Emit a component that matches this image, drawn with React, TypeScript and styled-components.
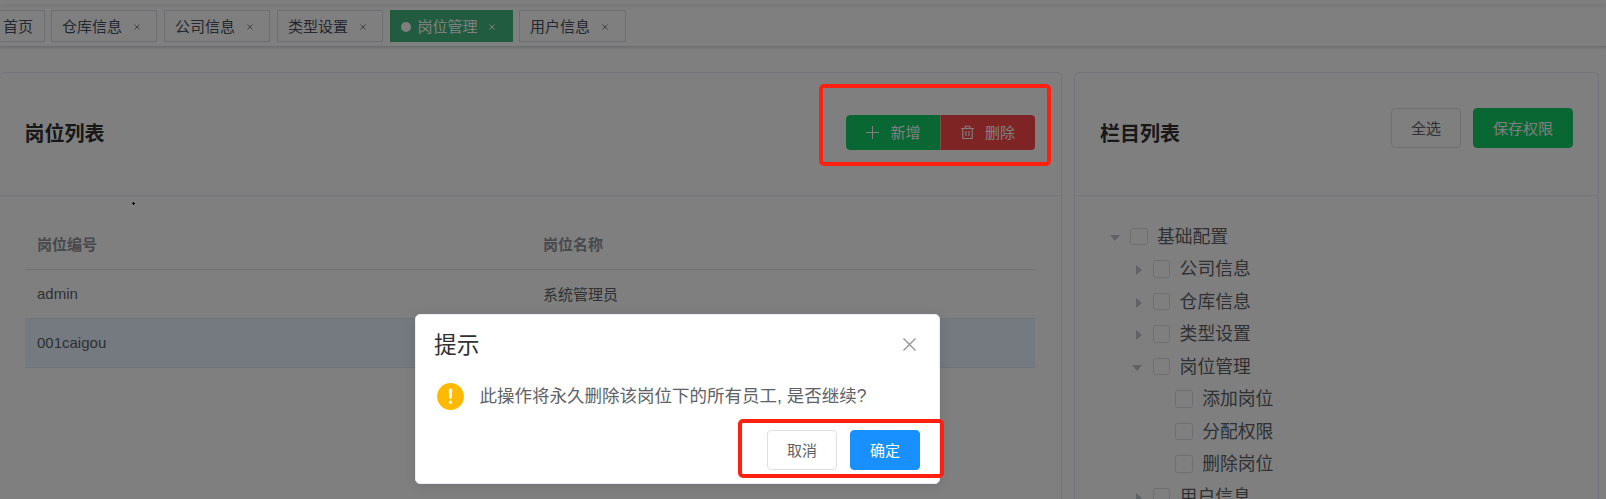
import React from 'react';
import styled, { createGlobalStyle, css } from 'styled-components';

const Global = createGlobalStyle`
  * { box-sizing: border-box; }
  html, body { margin: 0; padding: 0; background: #fff; }
  body {
    height: 499px;
    overflow: hidden;
    font-family: "Liberation Sans", "Noto Sans CJK SC", sans-serif;
    font-size: 15px;
    color: #606266;
  }
`;

const Page = styled.div`
  position: relative;
  width: 1606px;
  height: 499px;
  overflow: hidden;
  background: #fff;
`;

const NavbarEdge = styled.div`
  height: 5px;
  box-shadow: 0 1px 4px rgba(0, 21, 41, 0.08);
`;

const TagBar = styled.nav`
  display: flex;
  gap: 7px;
  height: 42px;
  padding-top: 5px;
  border-bottom: 1px solid #d8dce5;
  box-shadow: 0 1px 3px 0 rgba(0, 0, 0, 0.12), 0 0 3px 0 rgba(0, 0, 0, 0.04);
`;

const Tag = styled.div<{ $active?: boolean; $width: number }>`
  display: flex;
  align-items: center;
  flex: none;
  width: ${p => p.$width}px;
  height: 32px;
  padding: 1px 0 0 10px;
  border: 1px solid ${p => (p.$active ? '#42b983' : '#d8dce5')};
  background: ${p => (p.$active ? '#42b983' : '#fff')};
  color: ${p => (p.$active ? '#fff' : '#495060')};
  line-height: 29px;
  white-space: nowrap;
  &:first-child { margin: 0 -1px 0 -8px; }
  &:last-child { margin-left: -1px; }
`;

const ActiveDot = styled.span`
  width: 10px;
  height: 10px;
  margin-right: 6.5px;
  border-radius: 50%;
  background: #fff;
`;

const TagClose = styled.svg`
  width: 6px;
  height: 6px;
  margin: 1px 0 0 11.5px;
`;

const Columns = styled.main`
  display: grid;
  grid-template-columns: 1062px 525px;
  gap: 12px;
  padding-top: 25px;
`;

const Card = styled.section<{ $edge?: boolean }>`
  height: 460px;
  border: 1px solid #e6ebf5;
  border-left-width: ${p => (p.$edge ? 0 : 1)}px;
  border-radius: 5px;
  background: #fff;
`;

const CardHeader = styled.header<{ $inset?: number }>`
  display: flex;
  align-items: center;
  justify-content: space-between;
  height: 123px;
  padding: 0 25px 0 ${p => p.$inset ?? 25}px;
  border-bottom: 1px solid #e6ebf5;
`;

const CardTitle = styled.h3`
  margin: 0;
  font-size: 20px;
  line-height: 30px;
  color: #303133;
`;

const Actions = styled.div`
  display: flex;
  gap: 12px;
  margin-bottom: 12px;
`;

type Tone = 'plain' | 'success' | 'danger' | 'primary';
const tones: Record<Tone, [string, string, string]> = {
  plain: ['#fff', '#dcdfe6', '#606266'],
  success: ['#13ce66', '#13ce66', '#fff'],
  danger: ['#ff4949', '#ff4949', '#fff'],
  primary: ['#1890ff', '#1890ff', '#fff'],
};

const Button = styled.button<{ $tone: Tone; $width: number; $height?: number }>`
  display: flex;
  align-items: center;
  justify-content: center;
  width: ${p => p.$width}px;
  height: ${p => p.$height || 40}px;
  padding: 1px 0 0;
  border: 1px solid ${p => tones[p.$tone][1]};
  border-radius: 4px;
  background: ${p => tones[p.$tone][0]};
  color: ${p => tones[p.$tone][2]};
  font: inherit;
  line-height: 20px;
  svg { margin-right: 10px; }
`;

const ButtonGroup = styled.div`
  display: flex;
  margin: 0 1px 3px 0;
  ${Button} { padding: 0; }
  ${Button}:first-child { border-radius: 4px 0 0 4px; }
  ${Button}:last-child { border-radius: 0 4px 4px 0; border-left-color: rgba(255, 255, 255, 0.5); }
`;

const Table = styled.div`
  width: 1010px;
  margin: 25px 0 0 25px;
`;

const TableRow = styled.div<{ $head?: boolean; $current?: boolean }>`
  display: grid;
  grid-template-columns: 506px 1fr;
  align-items: center;
  height: 49px;
  padding: 0 0 ${p => (p.$head ? 3 : 2)}px 12px;
  border-bottom: 1px solid #dfe6ec;
  background: ${p => (p.$current ? '#e8f4ff' : '#fff')};
  ${p => p.$head && css`font-weight: bold; color: #909399;`}
`;

const Tree = styled.div`
  padding: 24.4px 0 0 34px;
`;

const TreeRow = styled.div<{ $level: number }>`
  display: flex;
  align-items: center;
  height: 32.5px;
  padding-left: ${p => p.$level * 22.6}px;
  font-size: 17.8px;
  line-height: 26px;
`;

const Caret = styled.span<{ $state: 'open' | 'closed' | 'leaf' }>`
  display: flex;
  justify-content: center;
  width: 11px;
  margin-right: 10px;
  &::before {
    content: '';
    border: 5px solid transparent;
    ${p => p.$state === 'open' && css`border-top: 6px solid #c0c4cc; border-bottom-width: 0; margin-top: 3px;`}
    ${p => p.$state === 'closed' && css`border-left: 6px solid #c0c4cc; border-right-width: 0; margin: 2px 0 0 3px;`}
  }
`;

const Checkbox = styled.span`
  width: 17.5px;
  height: 17.5px;
  margin-right: 9.5px;
  border: 1px solid #dcdfe6;
  border-radius: 2.5px;
  background: #fff;
`;

const Overlay = styled.div`
  position: absolute;
  inset: 0;
  background: rgba(0, 0, 0, 0.5);
`;

const Dialog = styled.div`
  width: 525px;
  height: 170px;
  margin: 314px 0 0 415px;
  padding: 14px 20px 0;
  border: 1px solid #ebeef5;
  border-radius: 5px;
  background: #fff;
  box-shadow: 0 2px 12px 0 rgba(0, 0, 0, 0.1);
`;

const DialogHeader = styled.div`
  display: flex;
  align-items: center;
  justify-content: space-between;
  height: 30px;
  padding-right: 3px;
  margin-left: -2px;
  font-size: 22.7px;
  color: #303133;
`;

const DialogTitle = styled.span`
  padding-top: 1px;
  line-height: 30px;
`;

const DialogBody = styled.div`
  display: flex;
  align-items: center;
  gap: 15.5px;
  height: 42px;
  margin: 16px 0 13px 1px;
  font-size: 17.5px;
  white-space: nowrap;
`;

const Message = styled.span`
  padding-bottom: 1px;
  line-height: 26px;
`;

const DialogFooter = styled.div`
  display: flex;
  justify-content: flex-end;
  gap: 13px;
  margin-right: -1px;
`;

const Highlight = styled.div<{ $x: number; $y: number; $w: number; $h: number }>`
  position: absolute;
  left: ${p => p.$x}px;
  top: ${p => p.$y}px;
  width: ${p => p.$w}px;
  height: ${p => p.$h}px;
  border: 4px solid #ff2010;
  border-radius: 5px;
`;

const Pointer = styled.svg`
  position: absolute;
  left: 132px;
  top: 202px;
`;

const tags = [
  { label: '首页', width: 53 },
  { label: '仓库信息', width: 106, closable: true },
  { label: '公司信息', width: 106, closable: true },
  { label: '类型设置', width: 106, closable: true },
  { label: '岗位管理', width: 123, closable: true, active: true },
  { label: '用户信息', width: 107, closable: true },
];

const nodes: { label: string; level: number; state: 'open' | 'closed' | 'leaf' }[] = [
  { label: '基础配置', level: 0, state: 'open' },
  { label: '公司信息', level: 1, state: 'closed' },
  { label: '仓库信息', level: 1, state: 'closed' },
  { label: '类型设置', level: 1, state: 'closed' },
  { label: '岗位管理', level: 1, state: 'open' },
  { label: '添加岗位', level: 2, state: 'leaf' },
  { label: '分配权限', level: 2, state: 'leaf' },
  { label: '删除岗位', level: 2, state: 'leaf' },
  { label: '用户信息', level: 1, state: 'closed' },
];

export default function App() {
  return (
    <Page>
      <Global />
      <NavbarEdge />
      <TagBar>
        {tags.map(t => (
          <Tag key={t.label} $active={t.active} $width={t.width}>
            {t.active && <ActiveDot />}
            {t.label}
            {t.closable && (
              <TagClose viewBox="0 0 6 6" stroke={t.active ? '#fff' : '#80858f'} strokeWidth="1">
                <path d="M.5 .5l5 5M5.5 .5l-5 5" />
              </TagClose>
            )}
          </Tag>
        ))}
      </TagBar>
      <Columns>
        <Card $edge>
          <CardHeader $inset={24.5}>
            <CardTitle>岗位列表</CardTitle>
            <ButtonGroup>
              <Button $tone="success" $width={94} $height={35}>
                <svg width="15" height="15" viewBox="0 0 15 15" fill="none" stroke="currentColor" strokeWidth="1">
                  <path d="M7.5 1v13M1 7.5h13" />
                </svg>
                新增
              </Button>
              <Button $tone="danger" $width={95} $height={35}>
                <svg width="15" height="15" viewBox="0 0 15 15" fill="none" stroke="currentColor" strokeWidth="1.1">
                  <path d="M1 3.5h13M2.8 3.5v10h9.4v-10M5.2 3.3V1.2h4.6v2.1M6 6v5M9 6v5" />
                </svg>
                删除
              </Button>
            </ButtonGroup>
          </CardHeader>
          <Table>
            <TableRow $head><span>岗位编号</span><span>岗位名称</span></TableRow>
            <TableRow><span>admin</span><span>系统管理员</span></TableRow>
            <TableRow $current><span>001caigou</span><span /></TableRow>
          </Table>
        </Card>
        <Card>
          <CardHeader>
            <CardTitle>栏目列表</CardTitle>
            <Actions>
              <Button $tone="plain" $width={70}>全选</Button>
              <Button $tone="success" $width={100}>保存权限</Button>
            </Actions>
          </CardHeader>
          <Tree>
            {nodes.map((n, i) => (
              <TreeRow key={i} $level={n.level}>
                <Caret $state={n.state} />
                <Checkbox />
                {n.label}
              </TreeRow>
            ))}
          </Tree>
        </Card>
      </Columns>
      <Overlay>
        <Dialog>
          <DialogHeader>
            <DialogTitle>提示</DialogTitle>
            <svg width="13" height="13" viewBox="0 0 13 13" stroke="#909399" strokeWidth="1.3">
              <path d="M.5 .5l12 12M12.5 .5l-12 12" />
            </svg>
          </DialogHeader>
          <DialogBody>
            <svg width="27" height="27" viewBox="0 0 27 27">
              <circle cx="13.5" cy="13.5" r="13.4" fill="#ffba00" />
              <path d="M11.7 7.4a1.8 1.8 0 0 1 3.6 0l-.7 7.6a1.1 1.1 0 0 1-2.2 0z" fill="#fff" />
              <circle cx="13.5" cy="19.2" r="1.6" fill="#fff" />
            </svg>
            <Message>此操作将永久删除该岗位下的所有员工, 是否继续?</Message>
          </DialogBody>
          <DialogFooter>
            <Button $tone="plain" $width={70}>取消</Button>
            <Button $tone="primary" $width={70}>确定</Button>
          </DialogFooter>
        </Dialog>
      </Overlay>
      <Highlight $x={819} $y={84} $w={232} $h={82} />
      <Highlight $x={738} $y={419} $w={206} $h={59} />
      <Pointer width="3" height="3" viewBox="0 0 3 3">
        <path d="M1 0h1v3h-1zM0 1h3v1h-3z" fill="#000" />
      </Pointer>
    </Page>
  );
}
